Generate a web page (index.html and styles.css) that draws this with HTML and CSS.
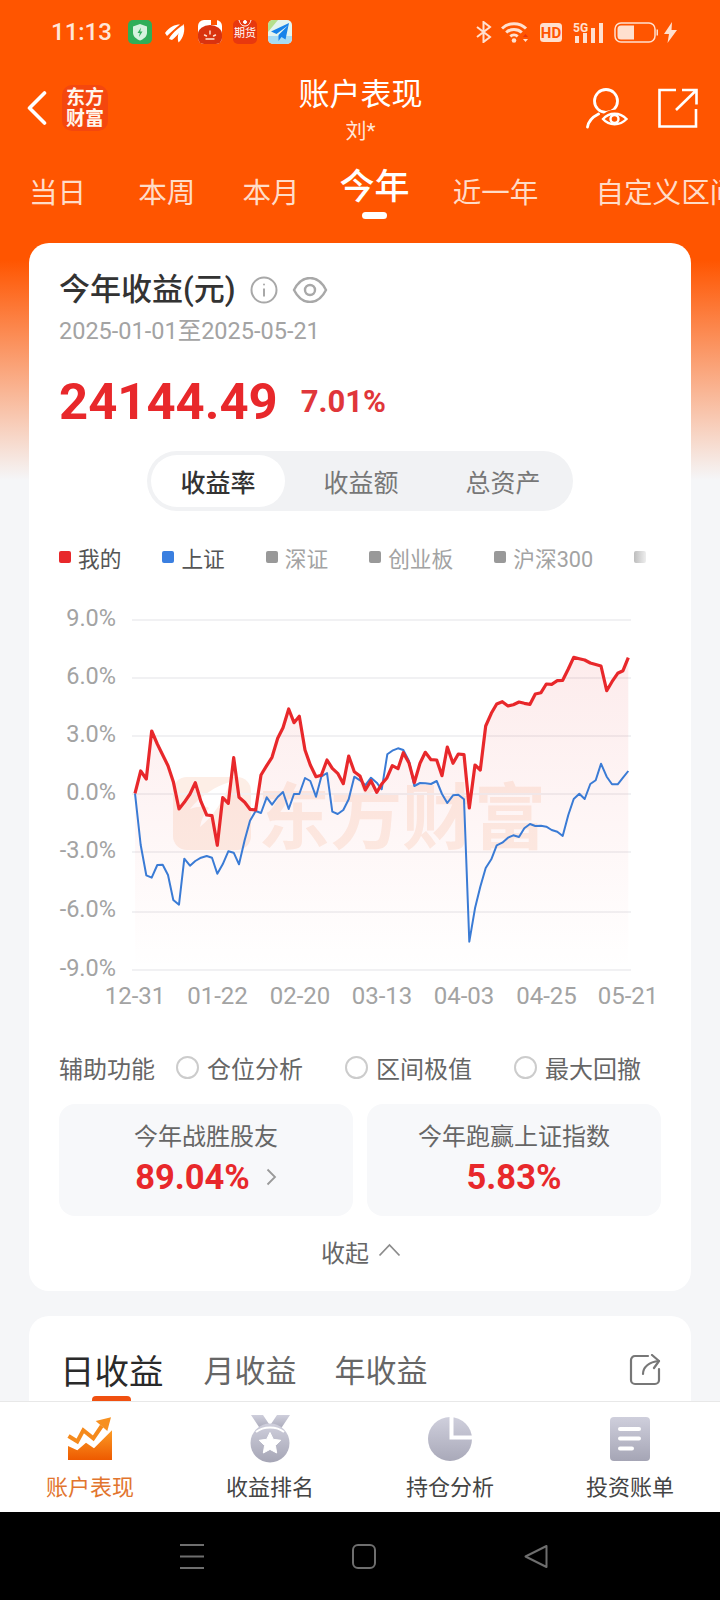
FILE: index.html
```html
<!DOCTYPE html>
<html lang="zh-CN">
<head>
  <meta charset="UTF-8" />
  <meta name="viewport" content="width=device-width, initial-scale=1.0"/>
  <title>账户表现</title>
  <link rel="stylesheet" href="styles.css">
</head>
<body>
  <main class="page">
    <!-- status bar -->
    <div class="status">
      <span class="time">11:13</span>
      <div class="app-icons">
        <svg width="24" height="24" viewBox="0 0 24 24">
          <rect width="24" height="24" rx="5" fill="#2fae58"/>
          <path d="M12 4l7 2.5v6c0 4-3.2 6.5-7 8-3.8-1.500-7-4-7-8v-6z" fill="#d6f2de"/>
          <path d="M13 7.5l-3.500 5.500h2.300l-.8 4 3.500-5.500h-2.300z" fill="#2fae58"/>
        </svg>
        <svg width="24" height="24" viewBox="0 0 24 24" fill="#fff">
          <path d="M2 13C6 7 12 4.500 17 4.500 13 7.500 8 12 4 16z"/>
          <path d="M6 19c3-6 8-9.500 13-13.500 0 5-5 10.500-10 14.500z"/>
          <path d="M15.500 22.500c-2-6 .5-13 5-18.500 2 6 0 14-5 18.500z"/>
        </svg>
        <svg width="24" height="24" viewBox="0 0 24 24">
          <rect width="24" height="24" rx="6" fill="#fff"/>
          <rect x="13" y="0" width="6" height="5" fill="#ff5500"/>
          <path d="M0 14a12 9 0 0 1 24 0v4a6 6 0 0 1-6 6H6a6 6 0 0 1-6-6z" fill="#d9330f"/>
          <path d="M12 11v3M6.5 15l2 1M17.5 15l-2 1M8 19h8" stroke="#ffe6d8" stroke-width="1.4" stroke-linecap="round"/>
        </svg>
        <div class="app-futures">
          <svg width="14" height="7" viewBox="0 0 14 7" fill="none" stroke="#fff" stroke-width="1"><path d="M1 0c1 4 3 6 6 6s5-2 6-6"/><circle cx="7" cy="2" r="1.5" fill="#fff"/></svg>
          <span>期货</span>
        </div>
        <svg width="24" height="24" viewBox="0 0 24 24">
          <rect width="24" height="24" rx="5" fill="#e4f4ee"/>
          <path d="M0 5a5 5 0 0 1 5-5h5L0 12z" fill="#b5e08d"/>
          <path d="M0 19v-3h24v3a5 5 0 0 1-5 5H5a5 5 0 0 1-5-5z" fill="#a8dcf3"/>
          <path d="M21 3L3 11.5l5.500 2.500L20 5.500l-9.500 9.500v6l3-4 4 2.500z" fill="#1683ea"/>
        </svg>
      </div>
      <div class="sys-icons">
        <svg width="16" height="22" viewBox="0 0 16 22" fill="none" stroke="#ffe0cf" stroke-width="2"><path d="M1 6l13 10-6.500 5V1L14 6 1 16"/></svg>
        <svg class="sys-wifi" width="28" height="22" viewBox="0 0 28 22">
          <g fill="none" stroke="#ffe0cf" stroke-width="3">
            <path d="M1 7.500c6.500-6.500 17.500-6.500 24 0"/>
            <path d="M5.200 11.500c4.200-4 11.400-4 15.600 0"/>
            <path d="M9.300 15.300c2-1.600 5.400-1.600 7.400 0"/>
          </g>
          <circle cx="13" cy="19.500" r="2.300" fill="#ffe0cf"/>
          <path d="M24.500 13l2.500 3h-5z" fill="#e8360e"/>
          <path d="M24.500 21l2.500-3h-5z" fill="#ffe0cf"/>
        </svg>
        <svg width="22" height="19" viewBox="0 0 22 19">
          <rect width="22" height="19" rx="3.5" fill="#ffe0cf"/>
          <text x="11" y="15" text-anchor="middle" class="hd-text">HD</text>
        </svg>
        <svg width="31" height="21" viewBox="0 0 31 21">
          <text x="0" y="9.5" class="net-text">5G</text>
          <rect x="2" y="14" width="4" height="7" fill="#ffe0cf"/>
          <rect x="10" y="11" width="4" height="10" fill="#ffe0cf"/>
          <rect x="18" y="6" width="4" height="15" fill="#ffe0cf"/>
          <rect x="26" y="1" width="4" height="20" fill="#ffe0cf"/>
        </svg>
        <svg class="sys-battery" width="44" height="21" viewBox="0 0 44 21">
          <rect x="1" y="1" width="40" height="19" rx="6" fill="none" stroke="#ffe0cf" stroke-width="1.5"/>
          <path d="M7 3.500h13v14H7a3.500 3.500 0 0 1-3.500-3.500V7A3.500 3.500 0 0 1 7 3.500z" fill="#ffe0cf"/>
          <rect x="42.500" y="7.500" width="1.500" height="6" fill="#ffe0cf"/>
        </svg>
        <svg class="sys-bolt" width="13" height="21" viewBox="0 0 13 21"><path d="M8 0L0 12h5l-1.500 9L13 8H7.500z" fill="#ffe0cf"/></svg>
      </div>
    </div>

    <!-- nav -->
    <header class="nav">
      <div class="nav-left">
        <svg width="20" height="34" viewBox="0 0 20 34" fill="none" stroke="#fff" stroke-width="3.6" stroke-linecap="round" stroke-linejoin="round"><path d="M17.500 2L2.500 17l15 15"/></svg>
        <div class="brand">东方<br>财富</div>
      </div>
      <div class="nav-title">
        <h1>账户表现</h1>
        <p>刘*</p>
      </div>
      <div class="nav-right">
        <svg width="42" height="42" viewBox="587 88 42 42" fill="none" stroke="#fff" stroke-width="2.8">
          <circle cx="607" cy="102" r="11.5"/>
          <path d="M588.500 128c1-6 5-10 11-13" stroke-linecap="round"/>
          <path d="M604 120c6-8.500 17-8.500 23.500 0-6.500 8.500-17.500 8.500-23.500 0z" fill="#ff5500" stroke="#ff5500" stroke-width="6"/>
          <path d="M604 120c6-7 17-7 23.500 0-6.500 7-17.500 7-23.500 0z" stroke-width="2.4"/>
          <circle cx="615.5" cy="120" r="4" stroke-width="2.4"/>
        </svg>
        <svg width="40" height="40" viewBox="658 88 40 40" fill="none" stroke="#fff" stroke-width="2.6">
          <path d="M676 90h-16.500v36.500h36.500V109"/>
          <path d="M676 110l20-19.500M682 90h14.500v14.500"/>
        </svg>
      </div>
    </header>

    <!-- period tabs -->
    <nav class="periods">
      <span class="period">当日</span>
      <span class="period">本周</span>
      <span class="period">本月</span>
      <span class="period period-active">今年</span>
      <span class="period">近一年</span>
      <span class="period">自定义区间</span>
    </nav>

    <section class="card card-main">
      <div class="card-title">
        <h2>今年收益(元)</h2>
        <svg width="28" height="28" viewBox="0 0 28 28" fill="none" stroke="#a8a8a8" stroke-width="2">
          <circle cx="14" cy="14" r="12.5"/>
          <path d="M14 12.500v8"/>
          <circle cx="14" cy="8.5" r="1" fill="#a8a8a8" stroke="none"/>
        </svg>
        <svg width="36" height="26" viewBox="0 0 36 26" fill="none" stroke="#a8a8a8" stroke-width="2.4">
          <path d="M2 13C10-3 26-3 34 13 26 29 10 29 2 13z"/>
          <circle cx="18" cy="13" r="5"/>
        </svg>
      </div>
      <p class="date-range">2025-01-01至2025-05-21</p>
      <div class="profit">
        <span class="profit-num">24144.49</span>
        <span class="profit-pct">7.01%</span>
      </div>

      <div class="segment">
        <span class="seg-item seg-active">收益率</span>
        <span class="seg-item">收益额</span>
        <span class="seg-item">总资产</span>
      </div>

      <div class="legend">
        <span class="legend-item legend-dark"><i class="dot dot-red"></i>我的</span>
        <span class="legend-item legend-dark"><i class="dot dot-blue"></i>上证</span>
        <span class="legend-item"><i class="dot"></i>深证</span>
        <span class="legend-item"><i class="dot"></i>创业板</span>
        <span class="legend-item"><i class="dot"></i>沪深300</span>
        <span class="legend-item"><i class="dot"></i></span>
      </div>

      <svg class="chart" width="602" height="415" viewBox="59 600 602 415">
        <defs>
          <linearGradient id="areaFill" x1="0" y1="0" x2="0" y2="1">
            <stop offset="0" stop-color="#e8282b" stop-opacity="0.09"/>
            <stop offset="1" stop-color="#e8282b" stop-opacity="0"/>
          </linearGradient>
        </defs>

        <rect x="173" y="777" width="78" height="73" rx="14" fill="#fdeee6"/>
        <path d="M230 782c-14 4-30 14-40 27 10-3 15-3 19-1-5 6-8 12-9 19 12-10 24-26 30-45z" fill="#fff"/>
        <text x="258" y="843" class="watermark">东方财富</text>

        <g stroke="#f1f1f3" stroke-width="2">
          <path d="M132 620H631"/>
          <path d="M132 678H631"/>
          <path d="M132 736H631"/>
          <path d="M132 794H631"/>
          <path d="M132 852H631"/>
          <path d="M132 912H631"/>
          <path d="M132 970H631"/>
        </g>

        <g class="y-labels" text-anchor="end">
          <text x="116" y="626">9.0%</text>
          <text x="116" y="684">6.0%</text>
          <text x="116" y="742">3.0%</text>
          <text x="116" y="800">0.0%</text>
          <text x="116" y="858">-3.0%</text>
          <text x="116" y="917">-6.0%</text>
          <text x="116" y="976">-9.0%</text>
        </g>

        <polygon fill="url(#areaFill)" points="135,970 135,793.3 140.7,771 146.3,779 151.7,731 157.3,744 162.7,755 168,765.7 173.3,781.7 179,809 184.3,802.3 190,794 195.3,782.7 201,801.7 206.7,815 212,815.7 217.3,845.3 222.7,797.7 228.3,803.3 233.7,757.7 239,797.3 244.7,802.3 250,809.3 255.7,810 261,775 266.7,765.7 272,757.3 277.7,738.3 283,727.7 288.7,709 294,722.7 299.3,716.3 305,750 310.3,765 316,776.7 321.3,775.3 327,760 332.3,768.3 337.7,773.3 343.3,783.7 348.7,756 354.3,771.7 360,776 365.3,790 371,780.7 376.7,792.3 381.7,784 386.7,778.3 392.3,765.7 398,768.7 403.3,752.7 409,763 414.3,782.7 420,763.3 425.3,752.3 431,759.7 436.7,760 442,775.7 447.3,747 453,763.3 458.3,754 464,754.7 469.3,808 475,765 480.3,770 485.7,726 491.3,713.3 496.7,704 502.3,701.7 508,706 513.3,704.7 519,702 524.3,703.3 530,704.3 535.3,694 541,692.7 546.3,684 551.7,684.3 557.3,680.7 562.7,680.3 568.3,669 573.7,657.3 579.3,658.7 584.7,660 590.3,663 595.7,664.5 601,666 606.7,690.7 612,681.7 617.7,673.3 623,670.7 628.3,657.7 628.3,970"/>

        <polyline class="line-blue" points="135,793.3 140.7,845 146.3,875.3 151.7,877.7 157.3,865 162.7,864.7 168,875 173.3,900 179,904.7 184.3,858.7 190,865.7 195.3,861 201,857.7 206.7,856 212,857.7 217.3,873.7 222.7,864.3 228.3,851.3 233.7,852.7 239,864.3 244.7,840 250,820.7 255.7,811 261,813 266.7,797.3 272,804.7 277.7,797 283,792 288.7,809 294,794 299.3,794 305,778 310.3,781 316,796.7 321.3,776.7 327,773 332.3,811.7 337.7,814 343.3,810 348.7,799.3 354.3,776.7 360,780.3 365.3,785.3 371,777.7 376.7,782.7 381.7,789.3 387.3,754.3 392.3,750.7 398,748.3 403.3,750 409,761 414.3,786 420,783 425.3,783.3 431,784 436.7,781 442,794 447.3,803 453,795.3 458.3,794.7 464,799.3 469.3,941.7 475,908.3 480.3,886.7 485.7,868 491.3,859.3 496.7,845.3 502.3,842.7 508,837.7 513.3,835.3 519,837 524.3,828.3 530,824 535.3,826 541,825.7 546.3,826.7 551.7,830 557.3,831.7 562.7,836 568.3,815 573.7,799 579.3,793.7 584.7,799 590.3,784 595.7,780.3 601,763.7 606.7,776.7 612,784.3 617.7,784.3 623,777.7 628.3,771"/>

        <polyline class="line-red" points="135,793.3 140.7,771 146.3,779 151.7,731 157.3,744 162.7,755 168,765.7 173.3,781.7 179,809 184.3,802.3 190,794 195.3,782.7 201,801.7 206.7,815 212,815.7 217.3,845.3 222.7,797.7 228.3,803.3 233.7,757.7 239,797.3 244.7,802.3 250,809.3 255.7,810 261,775 266.7,765.7 272,757.3 277.7,738.3 283,727.7 288.7,709 294,722.7 299.3,716.3 305,750 310.3,765 316,776.7 321.3,775.3 327,760 332.3,768.3 337.7,773.3 343.3,783.7 348.7,756 354.3,771.7 360,776 365.3,790 371,780.7 376.7,792.3 381.7,784 386.7,778.3 392.3,765.7 398,768.7 403.3,752.7 409,763 414.3,782.7 420,763.3 425.3,752.3 431,759.7 436.7,760 442,775.7 447.3,747 453,763.3 458.3,754 464,754.7 469.3,808 475,765 480.3,770 485.7,726 491.3,713.3 496.7,704 502.3,701.7 508,706 513.3,704.7 519,702 524.3,703.3 530,704.3 535.3,694 541,692.7 546.3,684 551.7,684.3 557.3,680.7 562.7,680.3 568.3,669 573.7,657.3 579.3,658.7 584.7,660 590.3,663 595.7,664.5 601,666 606.7,690.7 612,681.7 617.7,673.3 623,670.7 628.3,657.7"/>

        <g class="x-labels" text-anchor="middle">
          <text x="135" y="1004">12-31</text>
          <text x="217.5" y="1004">01-22</text>
          <text x="300" y="1004">02-20</text>
          <text x="382" y="1004">03-13</text>
          <text x="464" y="1004">04-03</text>
          <text x="546.5" y="1004">04-25</text>
          <text x="628" y="1004">05-21</text>
        </g>
      </svg>

      <div class="aux">
        <span class="aux-label">辅助功能</span>
        <span class="aux-opt"><i class="radio"></i>仓位分析</span>
        <span class="aux-opt"><i class="radio"></i>区间极值</span>
        <span class="aux-opt"><i class="radio"></i>最大回撤</span>
      </div>

      <div class="stats">
        <div class="stat">
          <p class="stat-label">今年战胜股友</p>
          <p class="stat-value">89.04%
            <svg width="11" height="18" viewBox="0 0 11 18" fill="none" stroke="#999" stroke-width="1.8"><path d="M1.500 1.500L9 9l-7.500 7.500"/></svg>
          </p>
        </div>
        <div class="stat">
          <p class="stat-label">今年跑赢上证指数</p>
          <p class="stat-value">5.83%</p>
        </div>
      </div>

      <div class="collapse">
        <span>收起</span>
        <svg width="23" height="14" viewBox="0 0 23 14" fill="none" stroke="#8c8c8c" stroke-width="1.8"><path d="M1.500 12.500L11.500 2l10 10.500"/></svg>
      </div>
    </section>

    <section class="card card-income">
      <div class="income-tabs">
        <span class="income-tab income-active">日收益</span>
        <span class="income-tab">月收益</span>
        <span class="income-tab">年收益</span>
        <svg class="income-share" width="32" height="32" viewBox="0 0 32 32" fill="none" stroke="#777" stroke-width="2.2" stroke-linecap="round" stroke-linejoin="round">
          <path d="M19 2H6a4 4 0 0 0-4 4v20a4 4 0 0 0 4 4h20a4 4 0 0 0 4-4V15"/>
          <path d="M14 20c0-7 6-12 16-13"/>
          <path d="M23 1l7 6-5 7"/>
        </svg>
      </div>
    </section>
  </main>

  <!-- bottom tabs -->
  <footer class="tabbar">
    <div class="tab tab-active">
      <svg width="46" height="46" viewBox="67 1415 46 46">
        <defs>
          <linearGradient id="trendFill" x1="0" y1="0" x2="0" y2="1">
            <stop offset="0" stop-color="#fb9b25"/>
            <stop offset="1" stop-color="#ee5a00"/>
          </linearGradient>
        </defs>
        <path d="M68 1445l9.300 4.300 8.700-7.600 8 5.600 18-18V1459H68z" fill="url(#trendFill)"/>
        <path d="M68.500 1435l8.800 5.500 6-11.200 10 8 8.400-12.300" fill="none" stroke="#f58a1c" stroke-width="4"/>
        <path d="M111 1416.300l-15.300 3.700 11.600 10z" fill="#f79020"/>
      </svg>
      <span>账户表现</span>
    </div>
    <div class="tab">
      <svg width="46" height="50" viewBox="247 1413 46 50">
        <defs>
          <linearGradient id="grayFill" x1="0" y1="0" x2="0" y2="1">
            <stop offset="0" stop-color="#cfcfdc"/>
            <stop offset="1" stop-color="#a5a5b5"/>
          </linearGradient>
        </defs>
        <path d="M251 1414h12l7 10.500 7-10.500h13l-10 15h-19z" fill="url(#grayFill)"/>
        <circle cx="270" cy="1442" r="19.5" fill="url(#grayFill)"/>
        <path d="M256 1431a19 14 0 0 1 28 0" fill="none" stroke="#fff" stroke-width="2"/>
        <path d="M270 1431.500l3.300 6.800 7.500 1-5.400 5.200 1.300 7.500-6.700-3.600-6.700 3.600 1.300-7.500-5.400-5.200 7.500-1z" fill="#fff" stroke="#fff" stroke-width="1" stroke-linejoin="round"/>
      </svg>
      <span>收益排名</span>
    </div>
    <div class="tab">
      <svg width="46" height="46" viewBox="427 1415 46 46">
        <defs>
          <linearGradient id="pieFill" x1="0" y1="0" x2="0" y2="1">
            <stop offset="0" stop-color="#cfcfdc"/>
            <stop offset="1" stop-color="#a9a9b9"/>
          </linearGradient>
        </defs>
        <circle cx="450" cy="1438" r="22" fill="url(#pieFill)"/>
        <path d="M451.500 1415v21.500H473" fill="none" stroke="#fff" stroke-width="4"/>
      </svg>
      <span>持仓分析</span>
    </div>
    <div class="tab">
      <svg width="46" height="46" viewBox="607 1415 46 46">
        <defs>
          <linearGradient id="docFill" x1="0" y1="0" x2="0" y2="1">
            <stop offset="0" stop-color="#cfcfdc"/>
            <stop offset="1" stop-color="#a5a5b5"/>
          </linearGradient>
        </defs>
        <rect x="610" y="1416" width="40" height="44" rx="4" fill="url(#docFill)"/>
        <g stroke="#fff" stroke-width="4" stroke-linecap="round">
          <path d="M620 1428h19"/>
          <path d="M620 1437.500h19"/>
          <path d="M620 1447.500h12"/>
        </g>
      </svg>
      <span>投资账单</span>
    </div>
  </footer>

  <!-- system navigation -->
  <div class="sysnav">
    <svg width="24" height="25" viewBox="0 0 24 25" stroke="#6e6e6e" stroke-width="2"><path d="M0 1h24M0 12.500h24M0 24h24"/></svg>
    <svg width="24" height="25" viewBox="0 0 24 25" fill="none" stroke="#6e6e6e" stroke-width="2"><rect x="1" y="1" width="22" height="23" rx="5"/></svg>
    <svg width="24" height="25" viewBox="0 0 24 25" fill="none" stroke="#6e6e6e" stroke-width="2" stroke-linejoin="round"><path d="M22.500 2v21L1.500 12.500z"/></svg>
  </div>
</body>
</html>
```

FILE: styles.css
```css
* {
  box-sizing: border-box;
}

html, body {
  margin: 0;
  padding: 0;
}

body {
  width: 720px;
  height: 1600px;
  display: flex;
  flex-direction: column;
  overflow: hidden;
  font-family: Roboto, "Noto Sans CJK SC", sans-serif;
  color: #333;
}

h1, h2, p {
  margin: 0;
  font-weight: 400;
}

i {
  font-style: normal;
}

.page {
  flex: 1;
  min-height: 0;
  overflow: hidden;
  background: linear-gradient(#ff5500 0, #ff5500 260px, #f5f6f8 480px);
}

/* status bar */
.status {
  height: 64px;
  display: flex;
  align-items: center;
  padding-left: 51px;
}

.time {
  width: 77px;
  font-size: 24px;
  font-weight: 500;
  color: #ffe6d8;
}

.app-icons {
  display: flex;
  align-items: center;
  gap: 11px;
}

.app-futures {
  width: 24px;
  height: 24px;
  display: flex;
  flex-direction: column;
  align-items: center;
  background: #e8380e;
  border-radius: 5px;
  color: #fff;
  font-size: 11px;
  line-height: 13px;
  font-weight: 400;
}

.sys-icons {
  margin-left: auto;
  margin-right: 43px;
  display: flex;
  align-items: center;
  gap: 11px;
}

.sys-wifi {
  margin-left: -2px;
}

.sys-battery {
  margin-left: -1px;
}

.sys-bolt {
  margin-left: -5px;
}

.hd-text {
  font-size: 15px;
  font-weight: 700;
  fill: #ff5500;
}

.net-text {
  font-size: 12px;
  font-weight: 700;
  fill: #ffe0cf;
}

/* nav */
.nav {
  height: 88px;
  display: flex;
  align-items: center;
  padding: 0 22px;
}

.nav-left, .nav-right {
  flex: 1;
  display: flex;
  align-items: center;
}

.nav-left {
  padding-left: 5px;
  gap: 15px;
}

.nav-right {
  justify-content: flex-end;
  gap: 30px;
}

.brand {
  width: 46px;
  height: 46px;
  background: #f4470e;
  border-radius: 10px;
  color: #fff6ec;
  font-size: 19px;
  line-height: 21px;
  font-weight: 700;
  text-align: center;
  padding-top: 2px;
}

.nav-title {
  margin-right: 4px;
  padding-top: 4px;
  text-align: center;
}

.nav-title h1 {
  font-size: 31px;
  line-height: 42px;
  color: #fff;
}

.nav-title p {
  font-size: 21px;
  line-height: 30px;
  color: #ffe6d8;
}

/* period tabs */
.periods {
  height: 91px;
  display: flex;
  align-items: flex-start;
  padding: 21px 0 0 29px;
  white-space: nowrap;
}

.period {
  font-size: 28.6px;
  line-height: 40px;
  color: #ffdcc8;
}

.period:nth-child(2) { margin-left: 52px; }
.period:nth-child(3) { margin-left: 47px; }
.period:nth-child(4) { margin-left: 40px; }
.period:nth-child(5) { margin-left: 43px; }
.period:nth-child(6) { margin-left: 57px; }

.period-active {
  margin-top: -5px;
  font-size: 35px;
  color: #fff;
  font-weight: 500;
  text-align: center;
}

.period-active::after {
  content: "";
  display: block;
  width: 25px;
  height: 7px;
  margin: 4px auto 0;
  background: #fff;
  border-radius: 4px;
}

/* cards */
.card {
  width: 662px;
  margin-left: 29px;
  background: #fff;
  border-radius: 20px;
}

.card-main {
  height: 1048px;
  padding: 27px 30px 0;
}

.card-title {
  display: flex;
  align-items: center;
  height: 40px;
}

.card-title h2 {
  font-size: 31px;
  font-weight: 500;
  line-height: 40px;
  color: #333;
}

.card-title svg {
  margin-left: 14px;
}

.date-range {
  margin-top: 6px;
  font-size: 23.5px;
  line-height: 30px;
  color: #a3a3a3;
}

.profit {
  margin-top: 25px;
  height: 60px;
  display: flex;
  align-items: center;
  gap: 23px;
  font-weight: 700;
}

.profit-num {
  font-size: 50.8px;
  color: #e8282b;
}

.profit-pct {
  font-size: 31px;
  color: #e0363a;
}

.segment {
  width: 426px;
  height: 60px;
  margin: 20px auto 0;
  padding: 4px;
  display: grid;
  grid-template-columns: 134px 152px 132px;
  background: #f1f2f4;
  border-radius: 30px;
  font-size: 25px;
  color: #777;
}

.seg-item {
  display: flex;
  align-items: center;
  justify-content: center;
  border-radius: 26px;
}

.seg-active {
  background: #fff;
  color: #333;
  font-weight: 500;
}

.legend {
  position: relative;
  margin-top: 31px;
  height: 30px;
  display: flex;
  align-items: center;
  gap: 41px;
  overflow: hidden;
  font-size: 21.7px;
  color: #a3a3a3;
  white-space: nowrap;
}

.legend::after {
  content: "";
  position: absolute;
  top: 0;
  right: 0;
  width: 36px;
  height: 100%;
  background: linear-gradient(to right, rgba(255,255,255,0), #fff 70%);
}

.legend-item {
  display: flex;
  align-items: center;
  gap: 7px;
}

.legend-dark {
  color: #555;
}

.dot {
  width: 12px;
  height: 12px;
  border-radius: 2px;
  background: #999;
}

.dot-red {
  background: #e8282b;
}

.dot-blue {
  background: #3a7fe0;
}

/* chart */
.chart {
  display: block;
  margin-top: 28px;
  overflow: visible;
}

.watermark {
  font-size: 72px;
  font-weight: 700;
  fill: #fdeee6;
}

.y-labels {
  font-size: 23.5px;
  fill: #a3a3a3;
}

.x-labels {
  font-size: 24px;
  fill: #a3a3a3;
}

.line-red, .line-blue {
  fill: none;
  stroke-linejoin: round;
}

.line-red {
  stroke: #e8282b;
  stroke-width: 3.2;
}

.line-blue {
  stroke: #3a7bd5;
  stroke-width: 2;
}

/* helper options */
.aux {
  margin-top: 37px;
  height: 30px;
  display: flex;
  align-items: center;
  font-size: 24px;
  color: #666;
}

.aux-label {
  margin-right: 21px;
}

.aux-opt {
  display: flex;
  align-items: center;
  gap: 8px;
  margin-right: 42px;
}

.aux-opt:last-child {
  margin-right: 0;
}

.radio {
  width: 23px;
  height: 23px;
  border: 2px solid #ccc;
  border-radius: 50%;
}

/* stat cards */
.stats {
  margin-top: 22px;
  display: grid;
  grid-template-columns: 1fr 1fr;
  gap: 14px;
}

.stat {
  height: 112px;
  padding-top: 15px;
  background: #f7f8fa;
  border-radius: 16px;
  text-align: center;
}

.stat-label {
  font-size: 24px;
  line-height: 36px;
  color: #666;
}

.stat-value {
  display: flex;
  align-items: center;
  justify-content: center;
  gap: 16px;
  margin-top: 1px;
  font-size: 34.5px;
  line-height: 42px;
  font-weight: 700;
  color: #e8282b;
}

.collapse {
  margin-top: 20px;
  height: 30px;
  display: flex;
  align-items: center;
  justify-content: center;
  gap: 9px;
  padding-left: 2px;
  font-size: 24px;
  color: #666;
}

.collapse svg {
  margin-bottom: 2px;
}

/* income card */
.card-income {
  margin-top: 25px;
  height: 200px;
  padding: 35px 30px 0 31px;
}

.income-tabs {
  display: flex;
  align-items: flex-start;
  gap: 38px;
  color: #666;
}

.income-tab {
  font-size: 31px;
  line-height: 42px;
}

.income-active {
  margin-right: 2px;
  font-size: 34.5px;
  color: #2a2a2a;
}

.income-active::after {
  content: "";
  display: block;
  width: 39px;
  height: 5px;
  margin: 3px auto 0;
  background: #f05010;
  border-radius: 4px 4px 0 0;
}

.income-share {
  margin: 3px 0 0 auto;
}

/* bottom tabs */
.tabbar {
  height: 111px;
  flex-shrink: 0;
  display: grid;
  grid-template-columns: repeat(4, 180px);
  background: #fff;
  border-top: 1px solid #e8e8e8;
}

.tab {
  display: flex;
  flex-direction: column;
  align-items: center;
  padding-top: 12px;
  font-size: 22px;
  color: #444;
}

.tab svg {
  height: 50px;
  flex-shrink: 0;
}

.tab span {
  line-height: 30px;
  margin-top: 9px;
}

.tab-active {
  color: #e2752e;
}

/* system navigation */
.sysnav {
  height: 88px;
  flex-shrink: 0;
  background: #000;
  display: flex;
  justify-content: center;
  align-items: flex-start;
  gap: 148px;
  padding: 32px 0 0 8px;
}
```
